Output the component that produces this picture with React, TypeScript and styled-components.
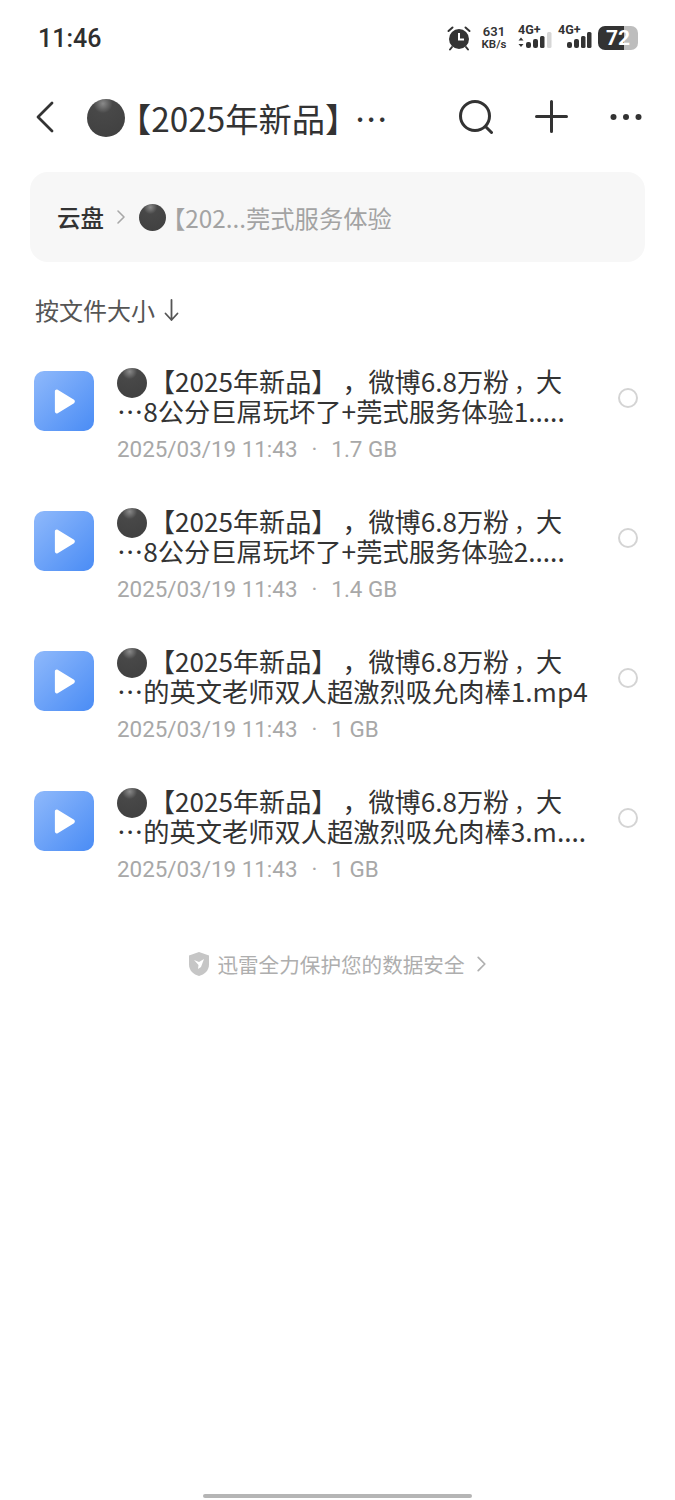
import React from 'react';
import styled, { createGlobalStyle } from 'styled-components';

const files = [
  { tail: '…8公分巨屌玩坏了+莞式服务体验1.....', size: '1.7 GB' },
  { tail: '…8公分巨屌玩坏了+莞式服务体验2.....', size: '1.4 GB' },
  { tail: '…的英文老师双人超激烈吸允肉棒1.mp4', size: '1 GB' },
  { tail: '…的英文老师双人超激烈吸允肉棒3.m....', size: '1 GB' },
];

const Global = createGlobalStyle`
  html, body { margin: 0; padding: 0; background: #fff; }
  body { font-family: "Roboto", "Noto Sans CJK SC", sans-serif; color: #2b2b2b; }
`;

const Page = styled.div`
  width: 675px;
  height: 1500px;
  position: relative;
  overflow: hidden;
  display: flex;
  flex-direction: column;
`;

const StatusBar = styled.div`
  height: 76px;
  display: flex;
  align-items: center;
  justify-content: space-between;
  padding: 0 37px 0 38px;
  box-sizing: border-box;
`;

const Clock = styled.div`
  font-size: 25px;
  font-weight: 500;
  color: #2f2f2f;
`;

const StatusIcons = styled.div`
  display: flex;
  align-items: center;
`;

const Speed = styled.div`
  width: 28px;
  margin: 0 9px 0 9px;
  text-align: center;
  font-size: 11.5px;
  line-height: 13px;
  font-weight: 600;
  color: #333;
  white-space: nowrap;
`;

const SpeedValue = styled.div`
  font-size: 13px;
`;

const Battery = styled.div`
  width: 40px;
  height: 24px;
  margin-left: 6px;
  border-radius: 7px;
  background: linear-gradient(90deg, #333 0 66%, #bdbdbd 66% 100%);
  color: #fff;
  font-size: 21px;
  font-weight: 700;
  line-height: 24px;
  padding-left: 8px;
  box-sizing: border-box;
`;

const Header = styled.div`
  height: 84px;
  display: flex;
  align-items: center;
  padding: 0 33px 0 36px;
`;

const Back = styled.svg`
  width: 18px;
  height: 32px;
  flex: none;
  margin-bottom: 3px;
`;

const HeaderTitle = styled.div`
  margin-left: 33px;
  display: flex;
  align-items: center;
  font-size: 33.3px;
  line-height: 44px;
  white-space: nowrap;
  color: #333;
  font-family: "Noto Sans CJK SC", sans-serif;
`;

const HeaderDots = styled.span`
  margin-left: -4px;
`;

const Actions = styled.div`
  margin-left: auto;
  display: flex;
  align-items: center;
  gap: 42px;
  padding-bottom: 3px;
`;

const Ball = styled.span<{ $size: number; $gap: number }>`
  display: inline-block;
  flex: none;
  width: ${(p) => p.$size}px;
  height: ${(p) => p.$size}px;
  margin-right: ${(p) => p.$gap}px;
  border-radius: 50%;
  background: radial-gradient(circle at 42% 12%, #8a8a8a 0, #484848 24%, #414141 82%, #5e5e5e 100%);
`;

const RowBall = styled(Ball)`
  transform: translateY(2px);
`;

const Crumbs = styled.div`
  margin: 12px 30px 0;
  height: 90px;
  border-radius: 18px;
  background: #f7f7f7;
  display: flex;
  align-items: center;
  padding-left: 27px;
  font-family: "Noto Sans CJK SC", sans-serif;
  font-size: 24.3px;
`;

const CrumbRoot = styled.span`
  color: #333;
  font-size: 23.5px;
  font-weight: 500;
`;

const CrumbArrow = styled.span`
  margin: 0 13px 0 12px;
  display: flex;
`;

const CrumbCurrent = styled.span`
  color: #a3a3a3;
  display: flex;
  align-items: center;
`;

const Sort = styled.div`
  margin: 32px 0 0 35px;
  font-family: "Noto Sans CJK SC", sans-serif;
  font-size: 24px;
  line-height: 32px;
  color: #555;
  display: flex;
  align-items: center;
  gap: 9px;
`;

const List = styled.div`
  margin-top: 16px;
`;

const Row = styled.div`
  height: 140px;
  display: flex;
  align-items: center;
  padding: 0 37px 0 34px;
  box-sizing: border-box;
`;

const FileIcon = styled.div`
  width: 60px;
  height: 60px;
  flex: none;
  border-radius: 10px;
  background: linear-gradient(135deg, #8fb9fb, #4a8cf5);
  display: flex;
  align-items: center;
  justify-content: center;
  margin-top: -22px;
`;

const Info = styled.div`
  margin-left: 23px;
  padding-top: 6px;
  flex: 1;
  min-width: 0;
`;

const TitleLine = styled.div<{ $size: number }>`
  font-family: "Noto Sans CJK SC", sans-serif;
  font-size: ${(p) => p.$size}px;
  line-height: 30px;
  white-space: nowrap;
  color: #333;
  display: flex;
  align-items: center;
`;

const Comma = styled.span<{ $size: number; $pad: number }>`
  font-size: ${(p) => p.$size}px;
  padding-left: ${(p) => p.$pad}px;
`;

const Meta = styled.div`
  margin-top: 8px;
  font-size: 22.4px;
  line-height: 30px;
  color: #a8a8a8;
  white-space: nowrap;
`;

const Dot = styled.span`
  margin: 0 14px;
`;

const Radio = styled.div`
  width: 16px;
  height: 16px;
  flex: none;
  border-radius: 50%;
  border: 2px solid #d4d4d4;
  margin-top: -28px;
`;

const Safety = styled.div`
  margin-top: 47px;
  display: flex;
  align-items: center;
  justify-content: center;
  gap: 7px;
  font-family: "Noto Sans CJK SC", sans-serif;
  font-size: 20.6px;
  line-height: 30px;
  color: #aeaeae;
`;

const SafetyArrow = styled.span`
  margin-left: 4px;
  display: flex;
`;

const HomeBar = styled.div`
  position: absolute;
  left: 203px;
  bottom: 2px;
  width: 269px;
  height: 4px;
  border-radius: 2px;
  background: #b5b5b5;
`;

const Chevron = ({ w, h, color }: { w: number; h: number; color: string }) => (
  <svg width={w} height={h} viewBox="0 0 10 16" fill="none">
    <path d="M2 2l6 6-6 6" stroke={color} strokeWidth="1.6" strokeLinecap="round" strokeLinejoin="round" />
  </svg>
);

const SignalBox = styled.svg<{ $gap: number }>`
  margin: -3px 0 0 ${(p) => p.$gap}px;
  flex: none;
`;

const Signal = ({ first }: { first?: boolean }) => (
  <SignalBox $gap={first ? 0 : 3} width="36" height="31" viewBox="0 0 36 31">
    <text x={first ? 1 : 2} y="13" fontSize="12.5" fontWeight="700" fontFamily="Roboto" fill="#333">4G+</text>
    {first && <path d="M4 16.500l2.500 3h-5zM4 26l2.500-3h-5z" fill="#333" />}
    <rect x={first ? 9 : 11} y="21" width="5" height="6" rx="2" fill="#333" />
    <rect x={first ? 16 : 18} y="18" width="5" height="9" rx="2" fill="#333" />
    <rect x={first ? 23 : 25} y="15" width="4.500" height="12" rx="1.500" fill="#333" />
    <rect x={first ? 30 : 31} y="11" width="4.500" height="16" rx="1.500" fill={first ? '#d6d6d6' : '#333'} />
  </SignalBox>
);

export default function App() {
  return (
    <Page>
      <Global />
      <StatusBar>
        <Clock>11:46</Clock>
        <StatusIcons>
          <svg width="24" height="26" viewBox="0 0 24 26">
            <circle cx="12" cy="14" r="10" fill="#333" />
            <path d="M12 8v6.500h5" stroke="#fff" strokeWidth="2" fill="none" />
            <path d="M1.500 6l4-3.500M22.500 6l-4-3.500M5 22l-2 2.500M19 22l2 2.500" stroke="#333" strokeWidth="2" strokeLinecap="round" />
          </svg>
          <Speed>
            <SpeedValue>631</SpeedValue>
            KB/s
          </Speed>
          <Signal first />
          <Signal />
          <Battery>72</Battery>
        </StatusIcons>
      </StatusBar>
      <Header>
        <Back viewBox="0 0 18 32" fill="none">
          <path d="M16 2L2 16l14 14" stroke="#333" strokeWidth="2.800" strokeLinecap="round" strokeLinejoin="round" />
        </Back>
        <HeaderTitle>
          <Ball $size={38} $gap={-7} />
          【2025年新品】
          <HeaderDots>…</HeaderDots>
        </HeaderTitle>
        <Actions>
          <svg width="34" height="34" viewBox="0 0 34 34" fill="none" stroke="#333" strokeWidth="3" strokeLinecap="round">
            <circle cx="16" cy="16" r="14.500" />
            <path d="M27 27l5.500 5.500" />
          </svg>
          <svg width="33" height="33" viewBox="0 0 33 33" fill="none" stroke="#333" strokeWidth="3" strokeLinecap="round">
            <path d="M16.500 1.500v30M1.500 16.500h30" />
          </svg>
          <svg width="32" height="8" viewBox="0 0 32 8" fill="#333">
            <circle cx="3.500" cy="4" r="3" />
            <circle cx="16" cy="4" r="3" />
            <circle cx="28.500" cy="4" r="3" />
          </svg>
        </Actions>
      </Header>
      <Crumbs>
        <CrumbRoot>云盘</CrumbRoot>
        <CrumbArrow>
          <Chevron w={10} h={16} color="#a8a8a8" />
        </CrumbArrow>
        <CrumbCurrent>
          <Ball $size={27} $gap={-5} />
          【202...莞式服务体验
        </CrumbCurrent>
      </Crumbs>
      <Sort>
        按文件大小
        <svg width="15" height="24" viewBox="0 0 15 24" fill="none" stroke="#555" strokeWidth="1.800" strokeLinecap="round" strokeLinejoin="round">
          <path d="M7.500 2v20M1.500 15.500l6 6.500 6-6.500" />
        </svg>
      </Sort>
      <List>
        {files.map((file) => (
          <Row key={file.tail}>
            <FileIcon>
              <svg width="25" height="27" viewBox="0 0 26 28">
                <path d="M3 3.500c0-1.500 1.600-2.400 2.900-1.600l17 10.400c1.200.8 1.200 2.600 0 3.400l-17 10.400C4.600 27 3 26 3 24.500z" fill="#fff" />
              </svg>
            </FileIcon>
            <Info>
              <TitleLine $size={26.1}>
                <RowBall $size={30} $gap={2} />
                【2025年新品】
                <Comma $size={26.1} $pad={5}>，</Comma>
                微博6.8万粉
                <Comma $size={22} $pad={5}>，</Comma>
                大
              </TitleLine>
              <TitleLine $size={26.25}>{file.tail}</TitleLine>
              <Meta>
                2025/03/19 11:43<Dot>·</Dot>{file.size}
              </Meta>
            </Info>
            <Radio />
          </Row>
        ))}
      </List>
      <Safety>
        <svg width="22" height="26" viewBox="0 0 22 26">
          <path d="M11 1l10 3.500v9C21 19.500 16.500 23.500 11 25 5.500 23.500 1 19.500 1 13.500v-9z" fill="#c6c6c6" />
          <path d="M6 9l5 2 5-3-3 8-3 2 .5-4z" fill="#fff" />
        </svg>
        <span>迅雷全力保护您的数据安全</span>
        <SafetyArrow>
          <Chevron w={11} h={18} color="#b0b0b0" />
        </SafetyArrow>
      </Safety>
      <HomeBar />
    </Page>
  );
}
